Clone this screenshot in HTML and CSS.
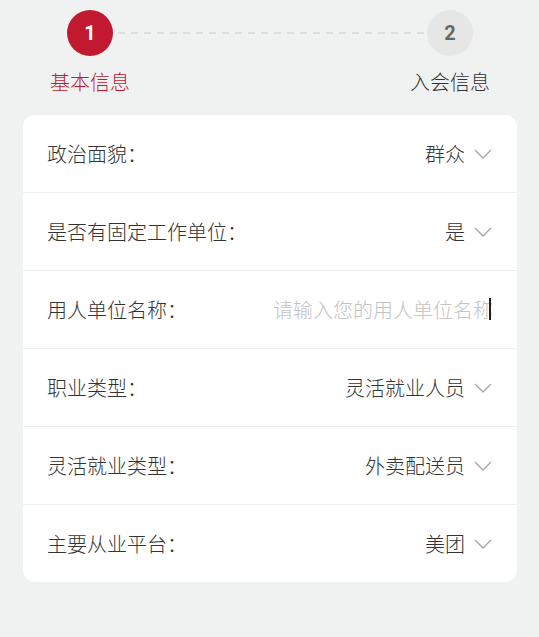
FILE: index.html
```html
<!DOCTYPE html>
<html lang="zh-CN">
<head>
<meta charset="utf-8">
<title>基本信息</title>
<link rel="stylesheet" href="styles.css">
</head>
<body>
<div class="steps">
  <div class="step active">
    <div class="circle">1</div>
    <div class="step-label">基本信息</div>
  </div>
  <div class="line"></div>
  <div class="step">
    <div class="circle">2</div>
    <div class="step-label">入会信息</div>
  </div>
</div>

<div class="card">
  <div class="row">
    <div class="label">政治面貌：</div>
    <div class="value">群众<svg class="chev" viewBox="0 0 18 10"><path d="M1 1 L9 9 L17 1" /></svg></div>
  </div>
  <div class="row">
    <div class="label">是否有固定工作单位：</div>
    <div class="value">是<svg class="chev" viewBox="0 0 18 10"><path d="M1 1 L9 9 L17 1" /></svg></div>
  </div>
  <div class="row">
    <div class="label">用人单位名称：</div>
    <div class="input"><span class="placeholder">请输入您的用人单位名称</span><span class="caret"></span></div>
  </div>
  <div class="row">
    <div class="label">职业类型：</div>
    <div class="value">灵活就业人员<svg class="chev" viewBox="0 0 18 10"><path d="M1 1 L9 9 L17 1" /></svg></div>
  </div>
  <div class="row">
    <div class="label">灵活就业类型：</div>
    <div class="value">外卖配送员<svg class="chev" viewBox="0 0 18 10"><path d="M1 1 L9 9 L17 1" /></svg></div>
  </div>
  <div class="row">
    <div class="label">主要从业平台：</div>
    <div class="value">美团<svg class="chev" viewBox="0 0 18 10"><path d="M1 1 L9 9 L17 1" /></svg></div>
  </div>
</div>
</body>
</html>
```

FILE: styles.css
```css
html, body {
  margin: 0;
  padding: 0;
}
body {
  background: #f0f2f1;
  font-family: "Noto Sans CJK SC", "Noto Sans", "Liberation Sans", sans-serif;
  font-weight: 300;
  color: #333333;
  width: 539px;
  height: 637px;
  overflow: hidden;
}
.steps {
  display: flex;
  align-items: flex-start;
  padding: 10px 49px 0 50px;
}
.step {
  width: 80px;
  display: flex;
  flex-direction: column;
  align-items: center;
  position: relative;
  z-index: 1;
}
.circle {
  width: 46px;
  height: 46px;
  border-radius: 50%;
  background: #e6e6e6;
  color: #666666;
  font-family: Roboto, "Liberation Sans", sans-serif;
  font-weight: bold;
  font-size: 20px;
  display: flex;
  align-items: center;
  justify-content: center;
}
.step.active .circle {
  background: #c1192f;
  color: #ffffff;
}
.step-label {
  margin-top: 12px;
  font-size: 20px;
  line-height: 28px;
  white-space: nowrap;
  color: #333333;
}
.step.active .step-label {
  color: #c1192f;
}
.line {
  flex: 1;
  height: 2px;
  margin: 22px -16px 0 -12px;
  background: repeating-linear-gradient(to right, #dcdddd 0 7px, transparent 7px 13px);
}
.card {
  margin: 19px 22px 0 23px;
  background: #ffffff;
  border-radius: 12px;
  overflow: hidden;
}
.row {
  height: 77px;
  display: flex;
  align-items: center;
  justify-content: space-between;
  padding: 0 25px 0 24px;
  border-bottom: 1px solid #efefef;
  font-size: 20px;
}
.row:last-child {
  border-bottom: none;
}
.label {
  white-space: nowrap;
  color: #333333;
}
.value {
  display: flex;
  align-items: center;
  white-space: nowrap;
  color: #333333;
}
.chev {
  width: 18px;
  height: 10px;
  margin-left: 9px;
  margin-top: 1px;
}
.chev path {
  fill: none;
  stroke: #a8a8a8;
  stroke-width: 1.4;
}
.input {
  position: relative;
  display: flex;
  align-items: center;
  margin-right: -1px;
}
.placeholder {
  color: #c4c4c4;
  white-space: nowrap;
}
.caret {
  position: absolute;
  right: 2px;
  top: 3px;
  width: 2px;
  height: 22px;
  background: #222222;
}
```
